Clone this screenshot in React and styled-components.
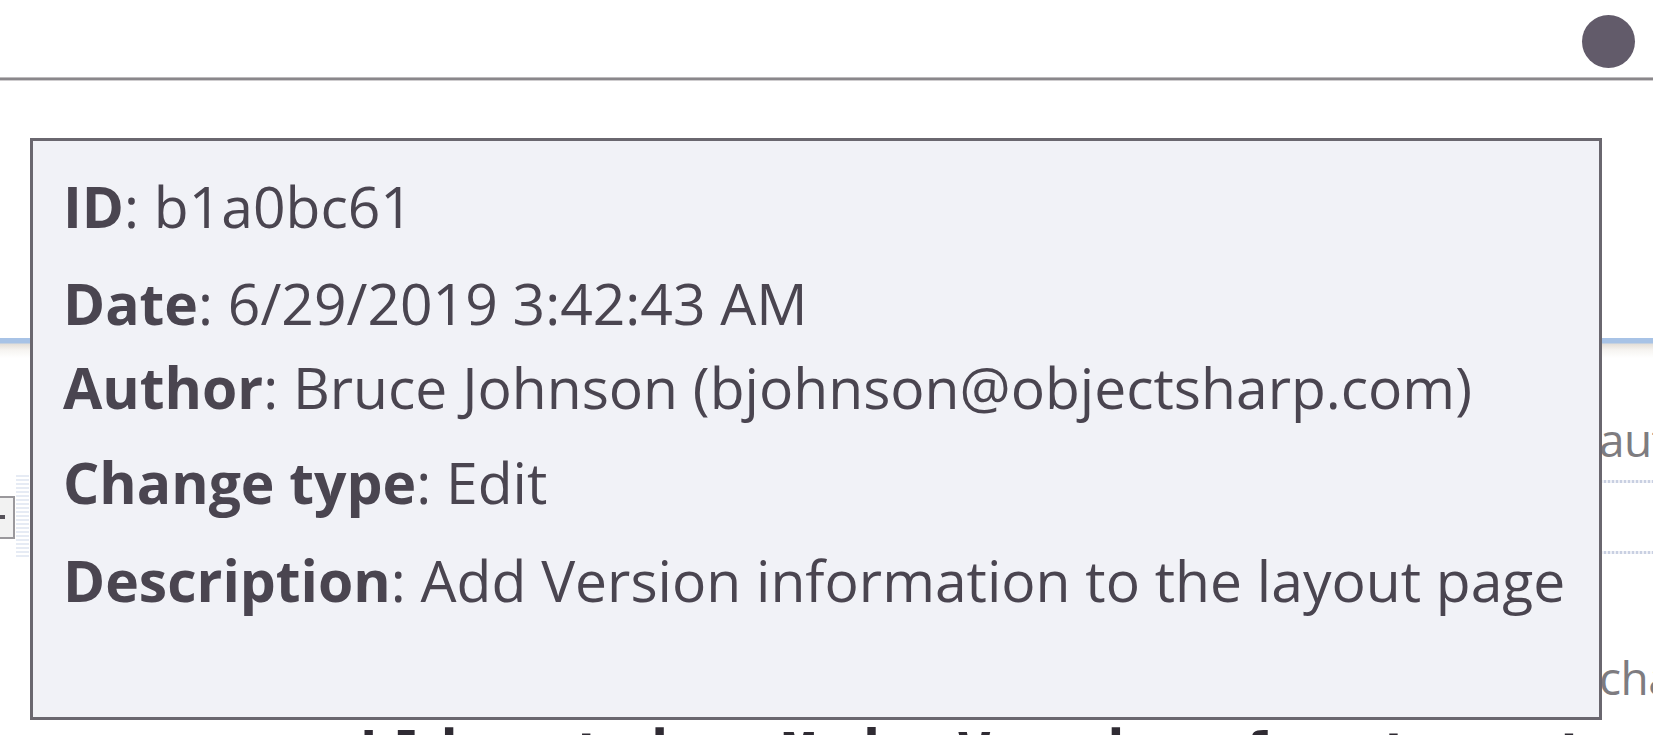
import React from "react";
import styled, { createGlobalStyle } from "styled-components";

const GlobalStyle = createGlobalStyle`
  html, body {
    margin: 0;
    padding: 0;
    background: #ffffff;
  }
  body {
    width: 1653px;
    height: 735px;
    overflow: hidden;
  }
`;

const Page = styled.div`
  position: relative;
  width: 1653px;
  height: 735px;
  overflow: hidden;
  background: #ffffff;
  font-family: "Open Sans", "Noto Sans", sans-serif;
`;

const Header = styled.header`
  height: 77px;
  box-sizing: border-box;
  display: flex;
  justify-content: flex-end;
  align-items: flex-start;
  padding: 15px 18px 0 0;
`;

const Avatar = styled.div`
  width: 53px;
  height: 53px;
  border-radius: 50%;
  background: #625b6a;
`;

const Divider = styled.div`
  height: 4px;
  background: linear-gradient(
    to bottom,
    #bdbbbd 0,
    #bdbbbd 1px,
    #8a878b 1px,
    #8a878b 3px,
    #cfcdcf 3px,
    #cfcdcf 4px
  );
`;

const Editor = styled.main`
  display: flex;
  flex-direction: column;
`;

const Spacer = styled.div`
  height: ${(p) => p.$h}px;
  flex: none;
`;

const LensSeparator = styled.div`
  height: 20px;
  flex: none;
  background: linear-gradient(
    to bottom,
    #a8c3e6 0,
    #a8c3e6 5px,
    #e4dfd8 6px,
    #f6f4f1 12px,
    #ffffff 20px
  );
`;

const Lens = styled.div`
  flex: none;
  box-sizing: border-box;
  height: ${(p) => p.$h}px;
  padding-top: ${(p) => p.$top}px;
  padding-left: 1599px;
  font-family: "Open Sans", "Noto Sans", sans-serif;
  font-size: 46px;
  letter-spacing: -0.5px;
  line-height: 63px;
  color: #7e7c80;
  white-space: nowrap;
`;

const DottedRule = styled.div`
  height: 3px;
  flex: none;
  margin-left: 1600px;
  background: repeating-linear-gradient(
    to right,
    #c9d0e2 0,
    #c9d0e2 2px,
    #eef0f6 2px,
    #eef0f6 4px
  );
`;

const OutlineRow = styled.div`
  height: 68px;
  flex: none;
  display: flex;
  align-items: center;
  gap: 1px;
`;

const Toggle = styled.div`
  width: 43px;
  height: 43px;
  margin-left: -28px;
  box-sizing: border-box;
  border: 2px solid #9a989c;
  background: #f2f2f2;
  display: flex;
  align-items: center;
  justify-content: center;

  &::after {
    content: "";
    width: 22px;
    height: 4px;
    background: #56525a;
  }
`;

const OutlineBand = styled.div`
  width: 13px;
  height: 84px;
  background: repeating-linear-gradient(
    to bottom,
    #e6ebf4 0,
    #e6ebf4 2px,
    #ffffff 2px,
    #ffffff 4px
  );
`;

const CodeLine = styled.div`
  flex: none;
  padding-left: 290px;
  font-family: "DejaVu Sans Mono", "Liberation Mono", monospace;
  font-weight: 700;
  font-size: 58.3px;
  line-height: normal;
  color: #2f2b33;
  white-space: pre;
`;

const Tooltip = styled.div`
  position: absolute;
  left: 30px;
  top: 138px;
  width: 1572px;
  height: 582px;
  box-sizing: border-box;
  border: 3px solid #6a676f;
  background: #f1f2f7;
  padding: 23px 30px;
  color: #4a4550;
  font-family: "Open Sans", "Noto Sans", sans-serif;
  font-size: 57px;
  line-height: 84px;
`;

const Field = styled.div`
  margin-top: ${(p) => p.$gap || 0}px;
  white-space: nowrap;
`;

const Label = styled.span`
  font-weight: 700;
`;

const fields = [
  { label: "ID", value: "b1a0bc61", gap: 0 },
  { label: "Date", value: "6/29/2019 3:42:43 AM", gap: 13 },
  { label: "Author", value: "Bruce Johnson (bjohnson@objectsharp.com)", gap: 0 },
  { label: "Change type", value: "Edit", gap: 11 },
  { label: "Description", value: "Add Version information to the layout page", gap: 14 },
];

export default function App() {
  return (
    <>
      <GlobalStyle />
      <Page>
        <Header>
          <Avatar />
        </Header>
        <Divider />
        <Editor>
          <Spacer $h={257} />
          <LensSeparator />
          <Lens $h={122} $top={50}>author, 1 change</Lens>
          <DottedRule />
          <OutlineRow>
            <Toggle />
            <OutlineBand />
          </OutlineRow>
          <DottedRule />
          <Lens $h={167} $top={92}>changes</Lens>
          <CodeLine>{"public string MajorVersion { get; set; }"}</CodeLine>
        </Editor>
        <Tooltip>
          {fields.map((f) => (
            <Field key={f.label} $gap={f.gap}>
              <Label>{f.label}</Label>: {f.value}
            </Field>
          ))}
        </Tooltip>
      </Page>
    </>
  );
}
